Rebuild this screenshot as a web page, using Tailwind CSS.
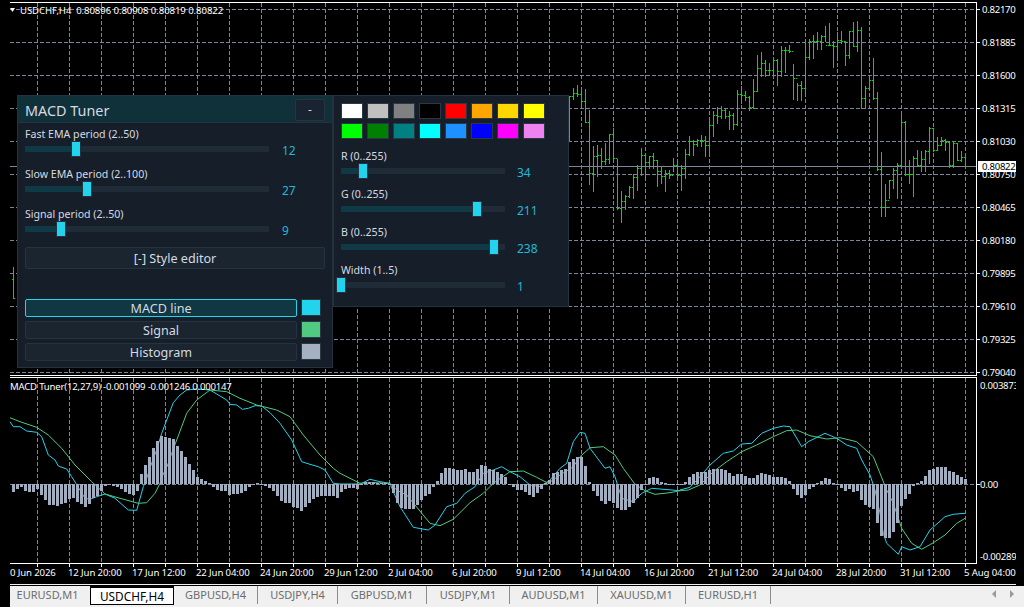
<!DOCTYPE html>
<html lang="en">
<head>
  <meta charset="UTF-8">
  <meta name="viewport" content="width=device-width, initial-scale=1.0">
  <title>USDCHF,H4 - MACD Tuner</title>
  <script src="https://cdn.jsdelivr.net/npm/@tailwindcss/browser@4"></script>
</head>
<body class="w-[1024px] h-[607px] overflow-hidden bg-black font-[family-name:'Noto_Sans',sans-serif] flex flex-col">

  <!-- Chart area: price pane and indicator pane -->
  <div class="relative flex-1">
    <svg id="chart" class="absolute inset-0" width="1024" height="584" font-family="'Noto Sans', sans-serif" font-size="9.6" fill="#ffffff">
      <g id="grid"></g>
      <g id="bars"></g>
      <g id="lines"></g>
      <g id="hist"></g>
      <g id="frame"></g>

      <!-- legend -->
      <polygon points="10,8 15,8 12.5,12" fill="#ffffff"/>
      <text x="20" y="13.5" letter-spacing="-0.08" xml:space="preserve">USDCHF,H4  0.80896 0.80908 0.80819 0.80822</text>
      <text x="10" y="389.5" letter-spacing="-0.2">MACD Tuner(12,27,9) -0.001099 -0.001246 0.000147</text>

      <!-- price axis -->
      <g letter-spacing="-0.28">
        <text x="982" y="12.5">0.82170</text>
        <text x="982" y="45.5">0.81885</text>
        <text x="982" y="78.5">0.81600</text>
        <text x="982" y="111.5">0.81315</text>
        <text x="982" y="144.5">0.81030</text>
        <text x="982" y="177.5">0.80750</text>
        <text x="982" y="210.5">0.80465</text>
        <text x="982" y="243.5">0.80180</text>
        <text x="982" y="276.5">0.79895</text>
        <text x="982" y="309.5">0.79610</text>
        <text x="982" y="342.5">0.79325</text>
        <text x="982" y="375.5">0.79040</text>
        <rect x="978" y="161" width="38" height="11" fill="#ffffff"/>
        <text x="982" y="170" fill="#000000">0.80822</text>
      </g>

      <!-- indicator axis, cut off at the window edge -->
      <svg x="0" y="0" width="1016" height="584" letter-spacing="-0.28">
        <text x="980" y="388.5">0.003873</text>
        <text x="980" y="487.5">0.00</text>
        <text x="980" y="559.5">-0.00289</text>
      </svg>

      <!-- time axis -->
      <g letter-spacing="-0.12">
        <text x="10" y="575.5">0 Jun 2026</text>
        <text x="68" y="575.5">12 Jun 20:00</text>
        <text x="132" y="575.5">17 Jun 12:00</text>
        <text x="196" y="575.5">22 Jun 04:00</text>
        <text x="260" y="575.5">24 Jun 20:00</text>
        <text x="324" y="575.5">29 Jun 12:00</text>
        <text x="388" y="575.5">2 Jul 04:00</text>
        <text x="452" y="575.5">6 Jul 20:00</text>
        <text x="516" y="575.5">9 Jul 12:00</text>
        <text x="580" y="575.5">14 Jul 04:00</text>
        <text x="644" y="575.5">16 Jul 20:00</text>
        <text x="708" y="575.5">21 Jul 12:00</text>
        <text x="772" y="575.5">24 Jul 04:00</text>
        <text x="836" y="575.5">28 Jul 20:00</text>
        <text x="900" y="575.5">31 Jul 12:00</text>
        <text x="964" y="575.5">5 Aug 04:00</text>
      </g>
    </svg>

    <!-- MACD Tuner panel -->
    <div class="absolute left-[17px] top-[95px] w-[316px] h-[273px] flex flex-col bg-[#151e29] border border-[#24313e] text-[#d5dbe2]">
      <div class="h-[27px] flex items-center justify-between px-[7px] bg-[#10303a] border-b border-[#24313e]">
        <span class="text-[14.4px] leading-none mt-[5px]">MACD Tuner</span>
        <button class="w-[30px] h-[22px] mt-[1px] bg-[#1a2430] border border-[#283541] rounded-[2px] text-[12px] leading-none">-</button>
      </div>
      <div class="flex flex-col px-[7px] pt-[4px]">
        <div class="text-[10.6px] leading-[14px]">Fast EMA period (2..50)</div>
        <div class="flex gap-[13px] h-[16px]">
          <div class="relative w-[244px] h-[6px] mt-[5px] bg-[#1f2c38]">
            <div class="h-full w-[51px] bg-[#0f3a45]"></div>
            <div class="absolute left-[46px] top-[-5px] w-[10px] h-[16px] bg-[#22d3ee] border border-[#24313e]"></div>
          </div>
          <span class="text-[12px] leading-[16px] mt-[2px] text-[#22b8d8]">12</span>
        </div>
        <div class="text-[10.6px] leading-[14px] mt-[10px]">Slow EMA period (2..100)</div>
        <div class="flex gap-[13px] h-[16px]">
          <div class="relative w-[244px] h-[6px] mt-[5px] bg-[#1f2c38]">
            <div class="h-full w-[62px] bg-[#0f3a45]"></div>
            <div class="absolute left-[57px] top-[-5px] w-[10px] h-[16px] bg-[#22d3ee] border border-[#24313e]"></div>
          </div>
          <span class="text-[12px] leading-[16px] mt-[2px] text-[#22b8d8]">27</span>
        </div>
        <div class="text-[10.6px] leading-[14px] mt-[10px]">Signal period (2..50)</div>
        <div class="flex gap-[13px] h-[16px]">
          <div class="relative w-[244px] h-[6px] mt-[5px] bg-[#1f2c38]">
            <div class="h-full w-[36px] bg-[#0f3a45]"></div>
            <div class="absolute left-[31px] top-[-5px] w-[10px] h-[16px] bg-[#22d3ee] border border-[#24313e]"></div>
          </div>
          <span class="text-[12px] leading-[16px] mt-[2px] text-[#22b8d8]">9</span>
        </div>
        <button class="h-[22px] mt-[10px] pt-[2px] bg-[#1a2530] border border-[#25323f] rounded-[2px] text-[12.6px] leading-none">[-] Style editor</button>
        <div class="flex flex-col gap-[4px] mt-[30px]">
          <div class="flex gap-[4px]">
            <button class="w-[272px] h-[18px] pt-[2px] bg-[#113842] border border-[#22d3ee] rounded-[2px] text-[12.6px] leading-none">MACD line</button>
            <div class="w-[20px] h-[17px] bg-[#22d3ee] border border-[#2a3744]"></div>
          </div>
          <div class="flex gap-[4px]">
            <button class="w-[272px] h-[18px] pt-[2px] bg-[#1a2530] border border-[#25323f] rounded-[2px] text-[12.6px] leading-none">Signal</button>
            <div class="w-[20px] h-[17px] bg-[#4fca80] border border-[#2a3744]"></div>
          </div>
          <div class="flex gap-[4px]">
            <button class="w-[272px] h-[18px] pt-[2px] bg-[#1a2530] border border-[#25323f] rounded-[2px] text-[12.6px] leading-none">Histogram</button>
            <div class="w-[20px] h-[17px] bg-[#a3b1c2] border border-[#2a3744]"></div>
          </div>
        </div>
      </div>
    </div>

    <!-- Style editor panel -->
    <div class="absolute left-[333px] top-[95px] w-[236px] h-[212px] flex flex-col px-[7px] pt-[7px] bg-[#151e29] border border-[#24313e] text-[#d5dbe2]">
      <div class="grid grid-cols-[repeat(8,22px)] gap-[4px]">
        <div class="h-[16px] border border-[#2a3744] bg-[#ffffff]"></div>
        <div class="h-[16px] border border-[#2a3744] bg-[#c0c0c0]"></div>
        <div class="h-[16px] border border-[#2a3744] bg-[#808080]"></div>
        <div class="h-[16px] border border-[#2a3744] bg-[#000000]"></div>
        <div class="h-[16px] border border-[#2a3744] bg-[#ff0000]"></div>
        <div class="h-[16px] border border-[#2a3744] bg-[#ffa500]"></div>
        <div class="h-[16px] border border-[#2a3744] bg-[#ffd700]"></div>
        <div class="h-[16px] border border-[#2a3744] bg-[#ffff00]"></div>
        <div class="h-[16px] border border-[#2a3744] bg-[#00ff00]"></div>
        <div class="h-[16px] border border-[#2a3744] bg-[#008000]"></div>
        <div class="h-[16px] border border-[#2a3744] bg-[#008080]"></div>
        <div class="h-[16px] border border-[#2a3744] bg-[#00ffff]"></div>
        <div class="h-[16px] border border-[#2a3744] bg-[#1e90ff]"></div>
        <div class="h-[16px] border border-[#2a3744] bg-[#0000ff]"></div>
        <div class="h-[16px] border border-[#2a3744] bg-[#ff00ff]"></div>
        <div class="h-[16px] border border-[#2a3744] bg-[#ee82ee]"></div>
      </div>
      <div class="text-[10.6px] leading-[14px] mt-[10px]">R (0..255)</div>
      <div class="flex gap-[12px] h-[16px]">
        <div class="relative w-[164px] h-[6px] mt-[5px] bg-[#1f2c38]">
          <div class="h-full w-[22px] bg-[#0f3a45]"></div>
          <div class="absolute left-[17px] top-[-5px] w-[10px] h-[16px] bg-[#22d3ee] border border-[#24313e]"></div>
        </div>
        <span class="text-[12px] leading-[16px] mt-[2px] text-[#22b8d8]">34</span>
      </div>
      <div class="text-[10.6px] leading-[14px] mt-[8px]">G (0..255)</div>
      <div class="flex gap-[12px] h-[16px]">
        <div class="relative w-[164px] h-[6px] mt-[5px] bg-[#1f2c38]">
          <div class="h-full w-[136px] bg-[#0f3a45]"></div>
          <div class="absolute left-[131px] top-[-5px] w-[10px] h-[16px] bg-[#22d3ee] border border-[#24313e]"></div>
        </div>
        <span class="text-[12px] leading-[16px] mt-[2px] text-[#22b8d8]">211</span>
      </div>
      <div class="text-[10.6px] leading-[14px] mt-[8px]">B (0..255)</div>
      <div class="flex gap-[12px] h-[16px]">
        <div class="relative w-[164px] h-[6px] mt-[5px] bg-[#1f2c38]">
          <div class="h-full w-[153px] bg-[#0f3a45]"></div>
          <div class="absolute left-[148px] top-[-5px] w-[10px] h-[16px] bg-[#22d3ee] border border-[#24313e]"></div>
        </div>
        <span class="text-[12px] leading-[16px] mt-[2px] text-[#22b8d8]">238</span>
      </div>
      <div class="text-[10.6px] leading-[14px] mt-[8px]">Width (1..5)</div>
      <div class="flex gap-[12px] h-[16px]">
        <div class="relative w-[164px] h-[6px] mt-[5px] bg-[#1f2c38]">
          <div class="absolute left-[-5px] top-[-5px] w-[10px] h-[16px] bg-[#22d3ee] border border-[#24313e]"></div>
        </div>
        <span class="text-[12px] leading-[16px] mt-[2px] text-[#22b8d8]">1</span>
      </div>
    </div>
  </div>

  <!-- Chart tabs -->
  <div class="h-[23px] flex flex-col">
    <div class="h-[1px] ml-[10px] mr-[8px] bg-[#f0f0f0]"></div>
    <div class="h-[22px] mt-[1px] ml-[10px] flex bg-[#f0f0f0] text-[11px] text-[#6d6d6d] leading-[18px]">
      <div class="w-[75px] h-[18px] text-center">EURUSD,M1</div>
      <div class="w-[84px] h-[19px] ml-[5px] text-center text-[11.8px] leading-[16px] text-black bg-white border border-black border-t-2">USDCHF,H4</div>
      <div class="w-[84px] h-[18px] text-center border-r border-[#8c8c8c]">GBPUSD,H4</div>
      <div class="w-[80px] h-[18px] text-center border-r border-[#8c8c8c]">USDJPY,H4</div>
      <div class="w-[89px] h-[18px] text-center border-r border-[#8c8c8c]">GBPUSD,M1</div>
      <div class="w-[83px] h-[18px] text-center border-r border-[#8c8c8c]">USDJPY,M1</div>
      <div class="w-[88px] h-[18px] text-center border-r border-[#8c8c8c]">AUDUSD,M1</div>
      <div class="w-[88px] h-[18px] text-center border-r border-[#8c8c8c]">XAUUSD,M1</div>
      <div class="w-[85px] h-[18px] text-center border-r border-[#8c8c8c]">EURUSD,H1</div>
      <div class="ml-auto flex gap-[13px] pt-[4px] pr-[9px]">
        <svg width="5" height="9"><polygon points="4,0 4,8 0,4" fill="#9a9a9a"/></svg>
        <svg width="5" height="9"><polygon points="0,0 0,8 4,4" fill="#9a9a9a"/></svg>
      </div>
    </div>
  </div>

  <script>
    // price bars, read from the chart as [high, low, close] at 3x, first bar at x=569, one every 4px
    const priceBars = [
      [288,420,290],[265,298,281],[255,290,282],[268,325,305],[268,368,368],[330,552,520],[438,575,468],[435,530,466],
      [445,505,485],[430,492,478],[404,490,404],[385,478,476],[478,628,625],[573,668,605],[585,628,588],[558,592,562],
      [522,595,532],[497,570,505],[445,525,465],[462,528,488],[468,505,470],[460,505,482],[480,560,515],[500,550,528],
      [512,575,520],[512,535,525],[475,515,495],[490,542,525],[495,572,505],[447,535,462],[408,465,425],[420,465,432],
      [418,440,420],[405,440,422],[408,470,435],[360,465,376],[333,410,345],[322,370,350],[318,355,332],[328,355,348],
      [335,388,345],[340,388,372],[270,375,282],[258,310,285],[275,300,292],[290,332,322],[238,325,275],[165,275,205],
      [157,228,190],[180,228,210],[190,225,210],[175,228,182],[178,255,213],[140,228,150],[142,218,150],[137,158,155],
      [192,298,235],[250,300,255],[245,302,265],[127,285,172],[118,178,125],[105,175,125],[97,148,125],[105,148,108],
      [78,125,135],[70,135,135],[125,203,140],[97,172,122],[93,130,125],[125,197,165],[93,175,95],[68,140,140],
      [63,155,90],[82,325,295],[258,325,265],[230,268,240],[175,298,295],[278,510,508],[456,648,622],[552,648,600],
      [540,595,542],[505,565,510],[490,595,495],[333,497,367],[365,525,522],[480,550,522],[470,590,475],[450,500,497],
      [455,515,478],[450,515,455],[382,490,385],[385,455,450],[413,450,435],[412,435,420],[418,452,428],[425,503,495],
      [423,503,430],[430,480,480],[453,485,472],[468,498,498]
    ];

    // histogram ends at 3x, zero at 343, first bar at x=13, one every 4px
    const histEnds = [
      365,358,352,362,365,365,358,374,390,404,406,408,402,398,386,385,396,402,411,403,384,378,362,347,345,348,352,358,365,373,376,362,
      313,286,262,234,212,199,200,203,206,228,243,262,282,300,322,326,332,338,350,360,362,362,375,372,372,370,362,352,345,340,342,348,
      353,363,378,392,399,400,410,414,422,412,398,388,380,378,378,378,378,383,
      365,358,355,355,358,342,336,336,336,340,340,340,342,370,400,415,418,418,418,405,390,378,372,350,332,308,294,294,297,300,300,297,
      306,306,298,286,288,298,300,305,312,322,346,350,360,360,365,375,380,370,358,340,330,310,305,300,298,275,268,262,262,288,335,362,
      378,392,403,392,398,415,420,420,410,398,385,360,345,325,322,325,335,338,342,342,342,
      342,335,322,312,307,307,305,300,297,297,297,300,310,317,312,312,318,325,325,314,310,312,315,322,322,322,325,332,358,375,385,375,
      358,350,340,332,325,328,338,342,353,362,358,365,362,390,405,412,418,460,498,505,505,485,458,408,388,372,348,338,332,318,300,297,
      292,292,292,302,306,314,322,328
    ];

    // lines at 3x, each segment was read from its own crop: [x offset, points]
    const macdLine = [
      [0,[30,155,40,170,60,170,80,183,110,187,125,200,145,255,165,270,175,288,200,297,215,320,235,352,255,385,270,388,290,380,315,372,345,385,385,420,410,421,430,350,440,325,452,288,468,245,485,190,500,150,520,98,540,75,560,60,590,57,630,60,650,72,680,90,690,103,710,105,727,118,745,115,765,107,785,108,810,128,840,160,875,210,905,275,930,283,955,290,975,300,1000,340,1020,342]],
      [1020,[60,342,90,328,120,335,150,340,160,365,180,410,220,472,265,480,285,465,320,410,350,400,375,370,405,350,430,310,460,300,485,290,510,305,540,320,570,345,600,350,630,330,660,295,680,280,700,215,720,187,735,190,750,235,795,295,810,290,825,320,845,385,880,395,905,370,935,355,1020,362]],
      [2040,[0,360,30,352,60,320,90,285,130,250,160,243,185,222,215,220,245,190,280,175,310,168,330,170,365,230,385,215,435,190,470,205,500,225,530,235,545,270,570,315,585,360,600,430,610,490,620,520,655,553,665,530,690,540,720,530,750,480,795,440,820,433,855,430]]
    ];
    const signalLine = [
      [0,[30,143,60,155,110,172,145,195,185,235,225,285,275,335,315,372,360,385,415,400,440,398,465,370,480,340,490,312,503,285,515,250,530,210,560,130,590,90,630,60,680,65,720,85,770,105,830,120,870,140,910,195,960,255,1000,295,1020,310]],
      [1020,[30,325,60,340,100,338,150,340,170,360,200,375,225,405,270,460,300,467,340,448,390,398,430,370,460,340,510,305,550,303,590,322,625,340,660,315,700,290,720,260,750,233,790,230,825,255,850,295,885,343,915,362,945,373,990,368,1020,362]],
      [2040,[25,360,60,345,100,305,140,275,185,245,230,225,280,200,320,182,350,180,390,197,440,207,480,203,530,215,580,260,620,360,640,400,665,475,695,520,725,538,760,518,795,495,830,460,855,445]]
    ];

    function px(x, y, w, h, color) {
      return `<rect x="${x}" y="${y}" width="${w}" height="${h}" fill="${color}"/>`;
    }

    function drawGrid() {
      const dash = 'stroke="#778899" stroke-dasharray="4 2" shape-rendering="crispEdges"';
      let out = "";
      for (let y = 9; y <= 372; y += 33) {
        out += `<line x1="10" x2="976" y1="${y + 0.5}" y2="${y + 0.5}" ${dash}/>`;
      }
      out += `<line x1="10" x2="976" y1="484.5" y2="484.5" ${dash}/>`;
      for (let x = 37; x <= 965; x += 32) {
        out += `<line x1="${x + 0.5}" x2="${x + 0.5}" y1="3" y2="375" ${dash}/>`;
        out += `<line x1="${x + 0.5}" x2="${x + 0.5}" y1="378" y2="563" ${dash}/>`;
      }
      out += px(10, 166, 966, 1, "#778899");
      document.getElementById("grid").innerHTML = out;
    }

    function drawFrame() {
      let out = px(10, 2, 967, 1, "#fff") + px(976, 2, 1, 374, "#fff") + px(10, 375, 967, 1, "#fff");
      out += px(10, 377, 967, 1, "#fff") + px(976, 377, 1, 187, "#fff") + px(10, 563, 967, 1, "#fff");
      for (let y = 9; y <= 372; y += 33) out += px(977, y, 3, 1, "#fff");
      out += px(977, 484, 3, 1, "#fff");
      for (let x = 37; x <= 965; x += 32) out += px(x, 564, 1, 3, "#fff");
      document.getElementById("frame").innerHTML = out;
    }

    function drawBars() {
      const green = "#00e000";
      let out = px(13, 267, 1, 32, green) + px(12, 279, 1, 1, green) + px(14, 298, 1, 1, green);
      let prevClose = 290;
      priceBars.forEach(([high, low, close], i) => {
        const x = 569 + i * 4;
        const top = Math.floor(high / 3);
        out += px(x, top, 1, Math.floor(low / 3) - top + 1, green);
        out += px(x - 1, Math.floor(prevClose / 3), 1, 1, green);
        out += px(x + 1, Math.floor(close / 3), 1, 1, green);
        prevClose = close;
      });
      document.getElementById("bars").innerHTML = out;
    }

    function linePath(segments) {
      const pts = [];
      segments.forEach(([offset, values]) => {
        for (let i = 0; i < values.length; i += 2) {
          pts.push(((values[i] + offset) / 3).toFixed(1) + "," + (370 + values[i + 1] / 3).toFixed(1));
        }
      });
      return pts.join(" ");
    }

    function drawLines() {
      document.getElementById("lines").innerHTML =
        `<polyline points="${linePath(macdLine)}" fill="none" stroke="#22d3ee" stroke-width="1"/>` +
        `<polyline points="${linePath(signalLine)}" fill="none" stroke="#4fca80" stroke-width="1"/>`;
    }

    function drawHist() {
      let out = "";
      histEnds.forEach((end, i) => {
        const x = 12 + i * 4;
        const y = Math.round(370 + end / 3);
        out += y < 484 ? px(x, y, 3, 484 - y, "#a0aec0") : px(x, 484, 3, Math.max(y - 484, 1), "#a0aec0");
      });
      document.getElementById("hist").innerHTML = out;
    }

    drawGrid();
    drawBars();
    drawLines();
    drawHist();
    drawFrame();
  </script>
</body>
</html>
